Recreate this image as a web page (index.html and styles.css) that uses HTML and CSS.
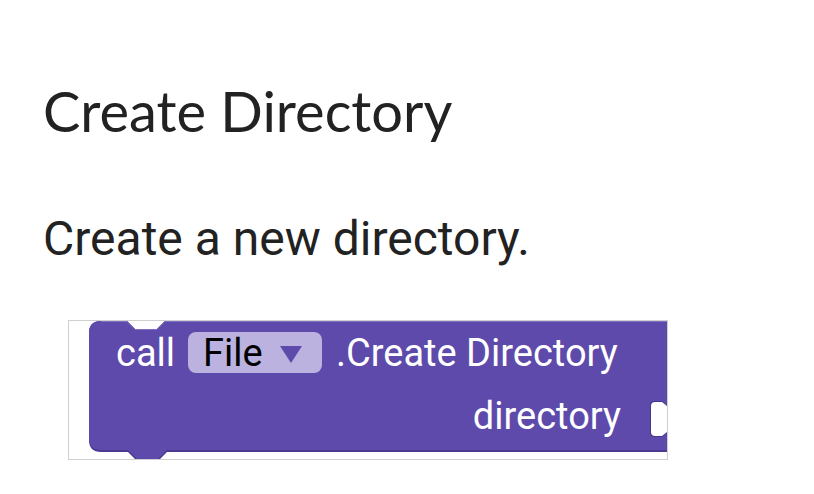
FILE: index.html
```html
<!DOCTYPE html>
<html lang="en-US">
  <head>
    <meta charset="utf-8">
    <meta name="viewport" content="width=device-width">
    <title>Create Directory</title>
    <link rel="stylesheet" href="styles.css">
  </head>

<body>
  <div class="doc">
    <h1 class="doc-title">Create Directory</h1>
    <p class="doc-text">Create a new directory.</p>

    <div class="block-frame">
      <svg class="block" width="598" height="138" viewBox="69 321 598 138">
        <!-- body shadow -->
        <path class="block-shade" d="M89,333 Q89,321 101,321 H127 L135,329 H157 L165,321 H700 V452 H167 L158,461 H137 L128,452 H101 Q89,452 89,440 Z"/>
        <!-- body -->
        <path class="block-body" d="M89,333 Q89,321 101,321 H127 L135,329 H157 L165,321 H700 V450 H167 L158,459 H137 L128,450 H101 Q89,450 89,438 Z"/>
        <path class="block-light" d="M101,321.5 H127 L135,329.5 H157 L165,321.5 H700"/>

        <text class="label" x="116" y="366">call</text>
        <rect class="dropdown" x="188" y="332" width="134" height="41" rx="8"/>
        <text class="dropdown-text" x="203" y="366">File</text>
        <polygon class="dropdown-arrow" points="280,346 302,346 291,363"/>
        <text class="label" x="336" y="366">.Create Directory</text>

        <text class="label" x="621" y="429" text-anchor="end">directory</text>
        <path class="socket-edge" d="M654,401 H662 L667,405 H672 V433 H667 L662,437 H654 Q650,437 650,433 V405 Q650,401 654,401 Z"/>
        <path class="socket" d="M655,402 H662 L667,406 H672 V432 H667 L662,436 H655 Q651,436 651,432 V406 Q651,402 655,402 Z"/>
      </svg>
    </div>
  </div>
</body>

</html>
```
FILE: styles.css
```css
body {
  margin: 0;
  background: #fff;
  color: #222;
}

.doc {
  padding: 0 0 0 43px;
}

.doc-title {
  font-family: Lato, sans-serif;
  font-weight: 400;
  font-size: 56px;
  line-height: 72px;
  margin: 75px 0 0;
}

.doc-text {
  font-family: Roboto, sans-serif;
  font-size: 48px;
  line-height: 56px;
  margin: 64px 0 0;
}

.block-frame {
  margin: 53px 0 0 25px;
  width: 600px;
  height: 140px;
  box-sizing: border-box;
  border: 1px solid #cfcfcf;
}

.block {
  display: block;
}

.block-shade {
  fill: #4a3b91;
}

.block-body {
  fill: #5d4aab;
}

.block-light {
  fill: none;
  stroke: #8071c4;
  stroke-width: 1;
}

.label {
  font-family: Roboto, sans-serif;
  font-size: 38px;
  fill: #fff;
}

.dropdown {
  fill: #bbb2df;
}

.dropdown-text {
  font-family: Roboto, sans-serif;
  font-size: 38px;
  fill: #000;
}

.dropdown-arrow {
  fill: #5d4aab;
}

.socket-edge {
  fill: #46388a;
}

.socket {
  fill: #fff;
}
```
